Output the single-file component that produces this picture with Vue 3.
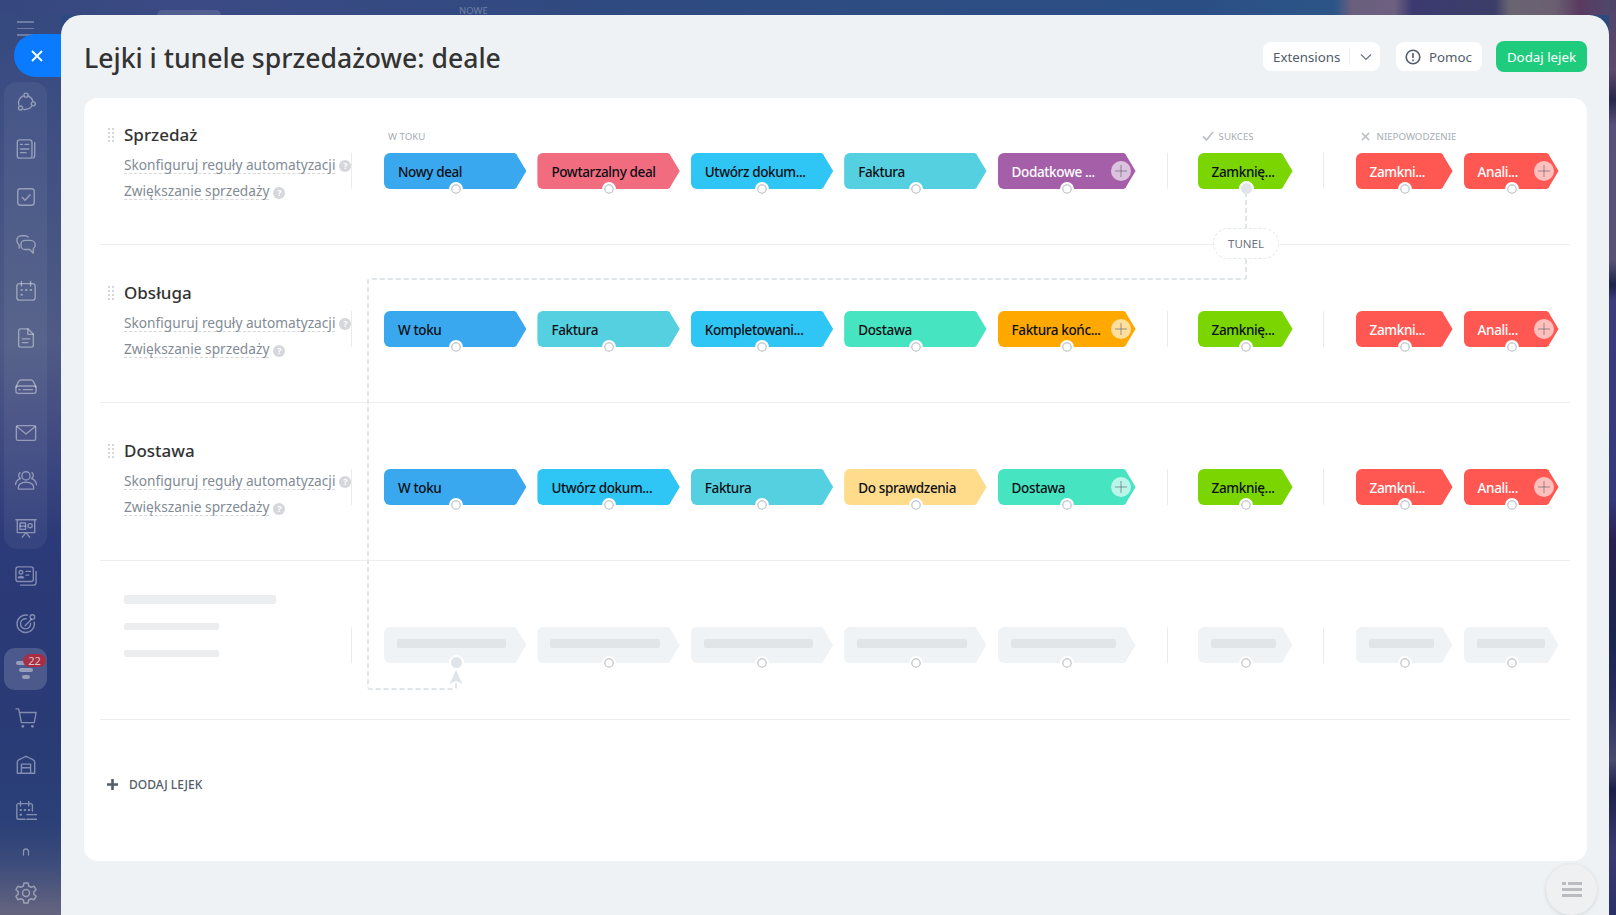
<script setup>
const rows = [
  {
    name: 'Sprzedaż', labels: true, connected: true,
    work: [['Nowy deal', '#39a8ef'], ['Powtarzalny deal', '#f16c7f'], ['Utwórz dokum...', '#2fc6f6'], ['Faktura', '#55d0e0'], ['Dodatkowe ...', '#a45fa8', 1]],
  },
  {
    name: 'Obsługa',
    work: [['W toku', '#39a8ef'], ['Faktura', '#55d0e0'], ['Kompletowani...', '#2fc6f6'], ['Dostawa', '#47e4c2'], ['Faktura końc...', '#ffa900']],
  },
  {
    name: 'Dostawa',
    work: [['W toku', '#39a8ef'], ['Utwórz dokum...', '#2fc6f6'], ['Faktura', '#55d0e0'], ['Do sprawdzenia', '#ffdb8c'], ['Dostawa', '#47e4c2']],
  },
]
const ghostWork = [110, 110, 110, 110, 110]
</script>

<template>
  <div class="page">
    <aside class="sidebar">
      <div class="burger"><i></i><i></i><i></i></div>
      <div class="side-group">
        <svg class="ic" viewBox="0 0 24 24"><circle cx="12" cy="4.500" r="2.200"/><circle cx="20" cy="14" r="2.200"/><circle cx="6" cy="18.500" r="2.200"/><path d="M15 5.500a9 9 0 0 1 4.500 5.500M18 17a9 9 0 0 1-8.500 3M4 15a9 9 0 0 1 4.500-9.500"/></svg>
        <svg class="ic" viewBox="0 0 24 24"><rect x="2.500" y="2" width="16" height="20" rx="2.500"/><path d="M21.500 5v14.500a2.500 2.500 0 0 1-2 2.400M6 7h2M11 7h4M6 12h9M6 16h6"/></svg>
        <svg class="ic" viewBox="0 0 24 24"><rect x="3" y="3" width="18" height="18" rx="3"/><path d="M8 12.500l3 3 5.500-6"/></svg>
        <svg class="ic" viewBox="0 0 24 24"><path d="M14.500 4.500A5 5 0 0 0 11 3H7a5 5 0 0 0-5 5c0 2.500 1 4 2.500 5v3.500"/><path d="M11 8h6a5 5 0 0 1 5 5 4.800 4.800 0 0 1-2 4v5l-4-4h-5a4.500 4.500 0 0 1-4.500-4.500v-1A4.500 4.500 0 0 1 11 8z"/></svg>
        <svg class="ic" viewBox="0 0 24 24"><rect x="2" y="4" width="20" height="18" rx="3"/><path d="M7 1.500v5M17 1.500v5"/><path class="dots" d="M7 11h.6M12 11h.6M17 11h.6M7 16h.6"/></svg>
        <svg class="ic" viewBox="0 0 24 24"><path d="M6 2h8l6 6v12a2 2 0 0 1-2 2H6a2 2 0 0 1-2-2V4a2 2 0 0 1 2-2z"/><path d="M14 2v6h6M8 13h8M8 17h6"/></svg>
        <svg class="ic" viewBox="0 0 24 24"><path d="M1 13l3-6a3 3 0 0 1 2.500-1.500h11A3 3 0 0 1 20 7l3 6"/><rect x="1" y="12" width="22" height="8" rx="2.500"/><path d="M4.500 16h1M9 16h10"/></svg>
        <svg class="ic" viewBox="0 0 24 24"><rect x="1.500" y="4" width="21" height="16" rx="1.500"/><path d="M2 5l10 8 10-8"/></svg>
        <svg class="ic" viewBox="0 0 24 24"><circle cx="12" cy="7.500" r="4.500"/><path d="M3.500 21c0-4 3-6.500 8.500-6.500s8.500 2.500 8.500 6.500c0 .5-.5 1-1 1h-15c-.5 0-1-.5-1-1zM5.500 4C3.500 5.500 3.500 9 6 10.500 3 11.500 1 14 .5 17M18.500 4c2 1.500 2 5-.5 6.500 3 1 5 3.500 5.500 6.500"/></svg>
        <svg class="ic" viewBox="0 0 24 24"><path d="M1 3h22M2.500 3v14h19V3M8 22l4-5 4 5"/><rect x="5.500" y="6.500" width="6" height="7"/><path d="M5.500 10h6"/><circle cx="16.500" cy="9.500" r="2.300"/></svg>
      </div>
      <div class="side-rest">
        <svg class="ic" viewBox="0 0 24 24"><rect x="1" y="2" width="19" height="16" rx="2.500"/><path d="M23 7v12a3 3 0 0 1-3 3H6"/><circle cx="6.500" cy="8" r="2"/><path d="M3.500 14c.5-2 5.500-2 6 0zM12 7h5M12 11h3"/></svg>
        <svg class="ic" viewBox="0 0 24 24"><path d="M13.500 3.500A9.500 9.500 0 1 0 21 11M12.500 7.500A5.500 5.500 0 1 0 17 12.500M11 15l7-7"/><circle cx="19" cy="5.500" r="2.500"/></svg>
        <div class="active-item">
          <i class="f1"></i><i class="f2"></i><i class="f3"></i>
          <span class="badge">22</span>
        </div>
        <svg class="ic cart" viewBox="0 0 24 24"><path d="M1 2h3l3 15h14l2-11H5"/><circle class="solid" cx="8.500" cy="21" r="1.500"/><circle class="solid" cx="19" cy="21" r="1.500"/></svg>
        <svg class="ic" viewBox="0 0 24 24"><path d="M2.500 21V9c0-1 .5-2 1.500-2.500l7-3.500a2.500 2.500 0 0 1 2 0l7 3.500c1 .5 1.500 1.500 1.500 2.500v12zM7 21V11h10v10M7 15h10"/></svg>
        <svg class="ic" viewBox="0 0 24 24"><path d="M11 21H4a2 2 0 0 1-2-2V6a2 2 0 0 1 2-2h13a2 2 0 0 1 2 2v6M6 1.500v5M15 1.500v5M13 16h11M13 21h11"/><path class="dots" d="M6 11h.6M10.500 11h.6M15 11h.6M6 16h.6"/></svg>
        <svg class="ic tiny" viewBox="0 0 8 8"><path d="M1.500 7V3.500a2.500 2.500 0 0 1 5 0V7"/></svg>
        <svg class="ic gear" viewBox="0 0 24 24"><circle cx="12" cy="12" r="3.500"/><path d="M10 2h4l.7 3 2.500 1.300 2.900-1 2 3.400-2.300 2.100v2.400l2.300 2.100-2 3.400-2.900-1-2.500 1.300-.7 3h-4l-.7-3-2.500-1.300-2.900 1-2-3.400 2.300-2.100v-2.400L1.900 8.700l2-3.400 2.900 1 2.500-1.300z"/></svg>
      </div>
    </aside>

    <div class="topbar">
      <span class="top-blob"></span>
      <span class="top-new">NOWE</span>
    </div>

    <button class="close" aria-label="Zamknij">
      <svg viewBox="0 0 14 14"><path d="M2 2l10 10M12 2L2 12"/></svg>
    </button>

    <main class="panel">
      <header class="head">
        <h1>Lejki i tunele sprzedażowe: deale</h1>
        <div class="head-actions">
          <div class="btn ext"><span>Extensions</span><i class="btn-sep"></i><svg viewBox="0 0 12 8"><path d="M1 1.500L6 6.500l5-5"/></svg></div>
          <div class="btn help"><svg viewBox="0 0 16 16"><circle cx="8" cy="8" r="6.800"/><path d="M8 4v5M8 10.500v1.700"/></svg><span>Pomoc</span></div>
          <div class="btn add">Dodaj lejek</div>
        </div>
      </header>

      <section class="card">
        <div v-for="(row, r) in rows" :key="row.name" class="row" :class="{ first: r === 0 }">
          <div class="info">
            <span class="grip"></span>
            <div class="info-text">
              <h2>{{ row.name }}</h2>
              <div class="link"><span>Skonfiguruj reguły automatyzacji</span><b>?</b></div>
              <div class="link"><span>Zwiększanie sprzedaży</span><b>?</b></div>
            </div>
          </div>
          <i class="sep s1"></i>
          <div class="group work">
            <div class="lab"><span v-if="row.labels">W TOKU</span></div>
            <div class="chips">
              <div v-for="(c, i) in row.work" :key="i" class="chip" :class="{ light: c[2], last: i === 4 }" :style="{ '--c': c[1] }">
                <span class="txt">{{ c[0] }}</span>
                <span v-if="i === 4" class="plus"></span>
                <span class="dot"></span>
              </div>
            </div>
          </div>
          <i class="sep s2"></i>
          <div class="group ok">
            <div class="lab"><template v-if="row.labels"><svg viewBox="0 0 12 10"><path d="M1 5.500L4.500 9 11 1"/></svg><span>SUKCES</span></template></div>
            <div class="chips">
              <div class="chip ok-chip" style="--c:#7bd500">
                <span class="txt">Zamknię...</span>
                <span class="dot" :class="{ filled: row.connected }"></span>
              </div>
            </div>
          </div>
          <i class="sep s3"></i>
          <div class="group bad">
            <div class="lab"><template v-if="row.labels"><svg viewBox="0 0 10 10"><path d="M1 1l8 8M9 1l-8 8"/></svg><span>NIEPOWODZENIE</span></template></div>
            <div class="chips">
              <div class="chip light f-a" style="--c:#ff5752"><span class="txt">Zamkni...</span><span class="dot"></span></div>
              <div class="chip light f-b" style="--c:#ff5752"><span class="txt">Anali...</span><span class="plus"></span><span class="dot"></span></div>
            </div>
          </div>
        </div>

        <div class="row ghost">
          <div class="info">
            <span class="grip none"></span>
            <div class="ghost-text"><i class="g1"></i><i class="g2"></i><i class="g2"></i></div>
          </div>
          <i class="sep s1"></i>
          <div class="group work">
            <div class="lab"></div>
            <div class="chips">
              <div v-for="(w, i) in ghostWork" :key="i" class="chip" :class="{ last: i === 4 }" style="--c:#f0f3f5">
                <i class="g-bar"></i>
                <span class="dot" :class="{ filled: i === 0 }"></span>
              </div>
            </div>
          </div>
          <i class="sep s2"></i>
          <div class="group ok">
            <div class="lab"></div>
            <div class="chips">
              <div class="chip ok-chip" style="--c:#f0f3f5"><i class="g-bar"></i><span class="dot"></span></div>
            </div>
          </div>
          <i class="sep s3"></i>
          <div class="group bad">
            <div class="lab"></div>
            <div class="chips">
              <div class="chip f-a" style="--c:#f0f3f5"><i class="g-bar"></i><span class="dot"></span></div>
              <div class="chip f-b" style="--c:#f0f3f5"><i class="g-bar"></i><span class="dot"></span></div>
            </div>
          </div>
        </div>

        <div class="add-row">
          <svg viewBox="0 0 11 11"><path d="M5.500 0v11M0 5.500h11"/></svg>
          <span>DODAJ LEJEK</span>
        </div>

        <svg class="wires" width="1503" height="763" viewBox="0 0 1503 763">
          <path d="M1162 94V131M1162 161V179a2 2 0 0 1-2 2H286a2 2 0 0 0-2 2V589a2 2 0 0 0 2 2H370a2 2 0 0 0 2-2V580"/>
          <path class="tip" d="M372 572l6.500 14-6.500-3-6.500 3z"/>
        </svg>
        <div class="tunnel">TUNEL</div>
      </section>
    </main>

    <button class="fab" aria-label="Menu"><i class="l0"></i><i class="l1"></i><i class="l1"></i></button>
  </div>
</template>

<style>
html, body { margin: 0; padding: 0; overflow: hidden; }
</style>

<style scoped>
.page {
  position: relative;
  width: 1616px;
  height: 915px;
  overflow: hidden;
  display: flex;
  font-family: "Noto Sans", "Open Sans", sans-serif;
  background-color: #2d4a80;
  background-repeat: no-repeat;
  background-image:
    linear-gradient(180deg, #4e4468 0, #5c4a6c 70px, #28274c 100px, #57507a 125px, #585278 260px, #1f2348 285px, #3a3c7c 300px, #35387a 500px, #2a2050 540px, #1a2550 640px, #2a2c5c 700px, #4a4a70 760px, #1e1f48 790px, #3a3a70 850px, #2a3068 915px),
    linear-gradient(90deg, #36477f 0, #3b4a84 200px, #2f4a80 600px, #2b4f85 1200px, #2c5587 1335px, #6a5f7d 1352px, #6d6080 1395px, #3b3a70 1412px, #3c3e68 1495px, #6a6472 1510px, #6a5f72 1555px, #5a3a60 1580px, #4d4a70 1616px),
    linear-gradient(180deg, #34497f 0, #3c4d82 100px, #4f5b85 340px, #424c82 430px, #2b3a78 540px, #293a75 720px, #2b4078 820px, #3a4a7a 860px, #65657f 915px);
  background-size: 7px 100%, 100% 15px, 61px 100%;
  background-position: right top, left top, left top;
}

.sidebar {
  width: 61px;
  flex: none;
  display: flex;
  flex-direction: column;
  align-items: flex-start;
}
.burger { margin: 21px 0 0 17px; height: 61px; display: flex; flex-direction: column; gap: 5px; }
.burger i { display: block; width: 17px; height: 1.500px; background: rgba(255, 255, 255, .28); }
.side-group {
  width: 43px;
  height: 467px;
  box-sizing: border-box;
  margin-left: 4px;
  padding: 8px 0;
  display: flex;
  flex-direction: column;
  align-items: center;
  gap: 23.300px;
  border-radius: 13px;
  background: rgba(255, 255, 255, .055);
}
.ic { width: 22px; height: 24px; fill: none; stroke: rgba(255, 255, 255, .42); stroke-width: 1.500; flex: none; stroke-linejoin: round; stroke-linecap: round; }
.ic .dots { stroke-width: 2.200; }
.ic .solid { fill: rgba(255, 255, 255, .42); stroke: none; }
.side-rest { margin: 15px 0 0 4px; width: 43px; display: flex; flex-direction: column; align-items: center; gap: 22.700px; }
.ic.cart { margin-top: 2px; }
.ic.tiny { width: 8px; height: 8px; margin-top: 2px; margin-bottom: 0; stroke-width: 1.300; }
.ic.gear { width: 24px; margin-top: 2px; }
.active-item {
  position: relative;
  width: 43px;
  height: 42px;
  margin: -9px 0;
  border-radius: 11px;
  background: rgba(255, 255, 255, .16);
}
.active-item i { position: absolute; height: 4px; border-radius: 2px; background: rgba(255, 255, 255, .42); }
.active-item .f1 { left: 12px; top: 13px; width: 18px; }
.active-item .f2 { left: 15px; top: 20px; width: 14px; }
.active-item .f3 { left: 18px; top: 27px; width: 8px; }
.badge {
  position: absolute;
  left: 19px;
  top: 6px;
  width: 23px;
  height: 13px;
  border-radius: 7px;
  background: #a62f45;
  color: rgba(255, 255, 255, .7);
  font-size: 11px;
  line-height: 13px;
  text-align: center;
}

.topbar { flex: 1; height: 15px; display: flex; align-items: flex-start; }
.top-blob { width: 64px; height: 5px; margin: 10px 0 0 96px; border-radius: 8px 8px 0 0; background: rgba(255, 255, 255, .12); }
.top-new { margin: 6px 0 0 238px; font-size: 9.500px; line-height: 10px; color: rgba(255, 255, 255, .3); }

.close {
  position: absolute;
  left: 14px;
  top: 34px;
  width: 49px;
  height: 43px;
  padding: 0 4px 0 0;
  border: 0;
  border-radius: 22px 0 0 22px;
  background: #0a7bff;
  display: flex;
  align-items: center;
  justify-content: center;
}
.close svg { width: 14px; height: 14px; fill: none; stroke: #fff; stroke-width: 1.800; }

.panel {
  position: absolute;
  left: 61px;
  top: 15px;
  right: 7px;
  bottom: 0;
  box-sizing: border-box;
  padding: 0 22px 0 23px;
  background: #eef2f4;
  border-radius: 20px 20px 0 0;
}
.head { height: 83px; display: flex; align-items: center; justify-content: space-between; }
h1 { margin: 3px 0 0; font-size: 26.600px; line-height: 34px; font-weight: 500; color: #333; }
.head-actions { display: flex; align-items: center; }
.btn { display: flex; align-items: center; box-sizing: border-box; font-size: 13.300px; color: #525c69; background: #fff; border-radius: 8px; height: 29px; }
.ext { width: 117px; padding-left: 10px; margin-right: 16px; }
.ext span { width: 76px; }
.btn-sep { width: 1px; height: 17px; background: #edeef0; }
.ext svg { width: 12px; height: 8px; margin-left: 10px; fill: none; stroke: #6a737f; stroke-width: 1.200; }
.help { width: 86px; padding-left: 9px; margin-right: 14px; gap: 8px; }
.help svg { width: 16px; height: 16px; fill: none; stroke: #525c69; stroke-width: 1.600; }
.add { width: 91px; height: 31px; justify-content: center; background: #1fcc7e; color: #fff; }

.card {
  position: relative;
  height: 763px;
  box-sizing: border-box;
  padding: 0 17px 0 16px;
  border-radius: 14px;
  background: #fff;
}
.row {
  height: 158px;
  box-sizing: border-box;
  padding-top: 36px;
  border-bottom: 1px solid #eceef0;
  display: flex;
  align-items: flex-start;
}
.row.first { height: 147px; padding-top: 25px; }
.row.ghost { height: 159px; }
.info { width: 251px; flex: none; display: flex; }
.grip {
  width: 8px;
  height: 16px;
  flex: none;
  margin: 4px 0 0 7px;
  background-image: radial-gradient(circle, #d3d6da 1.300px, transparent 1.500px);
  background-size: 4px 4px;
}
.grip.none { background: none; }
.info-text { margin-left: 9px; }
h2 { margin: 0; font-size: 17px; line-height: 24px; font-weight: 500; color: #333; }
.link { display: flex; align-items: center; height: 26.500px; font-size: 13.700px; color: #828b95; white-space: nowrap; }
.link:first-of-type { margin-top: 4.500px; }
.link span { line-height: 17px; border-bottom: 1px dashed #d5d7db; }
.link b {
  width: 12px;
  height: 12px;
  flex: none;
  margin: 3px 0 0 4px;
  border-radius: 50%;
  background: #d5d7dc;
  color: #fff;
  font-size: 9px;
  line-height: 12px;
  text-align: center;
}

.sep { width: 1px; height: 36px; margin-top: 30px; flex: none; background: #e9ebed; }
.s1 { margin-right: 32px; }
.s2 { margin-left: 31px; margin-right: 30px; }
.s3 { margin-left: 30px; margin-right: 32px; }
.group { flex: none; }
.lab { height: 30px; display: flex; align-items: center; padding: 0 0 4px 4px; box-sizing: border-box; font-size: 9.700px; color: #a8adb4; white-space: nowrap; }
.ok .lab svg, .bad .lab svg { fill: none; stroke: #bfc3c8; stroke-width: 1.800; margin-right: 5px; flex: none; }
.ok .lab svg { width: 12px; height: 10px; }
.bad .lab { padding-left: 5px; }
.bad .lab svg { width: 9px; height: 9px; margin-right: 7px; }
.chips { display: flex; gap: 11px; }
.chip { position: relative; width: 142.400px; height: 36px; flex: none; display: flex; align-items: center; }
.chip::before {
  content: "";
  position: absolute;
  inset: 0;
  border-radius: 6px;
  background: var(--c);
  clip-path: polygon(0 0, calc(100% - 12px) 0, calc(100% - 10px) 1px, calc(100% - 9px) 3px, 100% 50%, calc(100% - 9px) calc(100% - 3px), calc(100% - 10px) calc(100% - 1px), calc(100% - 12px) 100%, 0 100%);
}
.chip.last { width: 138px; }
.ok-chip { width: 95px; }
.f-a { width: 97px; }
.f-b { width: 95px; }
.txt { position: relative; margin: 1px 0 0 14px; font-size: 13.500px; letter-spacing: -.37px; font-weight: 500; color: #0b0f14; white-space: nowrap; }
.chip.light .txt { color: #fff; }
.dot {
  position: absolute;
  left: calc(50% + .5px);
  bottom: -7px;
  width: 14px;
  height: 14px;
  margin-left: -7px;
  box-sizing: border-box;
  border: 2px solid #fff;
  border-radius: 50%;
  background: #fff;
  box-shadow: inset 0 0 0 1.500px #c6cbcf;
}
.dot.filled { background: #dfe5e8; box-shadow: none; width: 15px; height: 15px; }
.plus {
  position: absolute;
  right: 5px;
  top: 8px;
  width: 20px;
  height: 20px;
  border-radius: 50%;
  background:
    linear-gradient(rgba(90, 100, 110, .32), rgba(90, 100, 110, .32)) center / 12px 2px no-repeat,
    linear-gradient(rgba(90, 100, 110, .32), rgba(90, 100, 110, .32)) center / 2px 12px no-repeat,
    rgba(255, 255, 255, .62);
}
.ghost-text { margin: -2px 0 0 9px; display: flex; flex-direction: column; align-items: flex-start; }
.ghost-text i { display: block; border-radius: 2px; background: #ebedef; }
.ghost-text .g1 { width: 152px; height: 9px; margin: 0 0 19px; }
.ghost-text .g2 { width: 95px; height: 7px; margin-bottom: 20px; }
.g-bar { position: relative; display: block; margin: -3px 20px 0 13px; height: 9px; flex: 1; border-radius: 2px; background: #e2e5e8; }
.ok-chip .g-bar { margin-right: 17px; }
.f-a .g-bar { margin-right: 19px; }
.f-b .g-bar { margin-right: 14px; }

.add-row { display: flex; align-items: center; margin: 56px 0 0 7px; height: 16px; gap: 11px; font-size: 12px; font-weight: 500; color: #535c69; }
.add-row svg { width: 11px; height: 11px; fill: none; stroke: #535c69; stroke-width: 2.600; }

.wires { position: absolute; left: 0; top: 0; pointer-events: none; fill: none; }
.wires path { stroke: #e0e5e8; stroke-width: 2; stroke-dasharray: 5 3; }
.wires .tip { fill: #dfe5e8; stroke: none; stroke-dasharray: none; }
.tunnel {
  position: absolute;
  left: 1129px;
  top: 130px;
  width: 66px;
  height: 31px;
  box-sizing: border-box;
  border: 1px dashed #e5e8ea;
  border-radius: 16px;
  background: #fff;
  color: #6a737f;
  font-size: 11.500px;
  line-height: 29px;
  text-align: center;
}

.fab {
  position: absolute;
  left: 1546px;
  top: 864px;
  width: 51px;
  height: 51px;
  padding: 0;
  border: 0;
  border-radius: 50%;
  background: #eff0f2;
  box-shadow: 0 1px 4px rgba(0, 0, 0, .12);
}
.fab i { position: absolute; height: 3px; background: #b9bcc0; }
.fab .l0 { left: 16px; right: 15px; top: 18px; background: linear-gradient(90deg, #b9bcc0 4px, transparent 4px, transparent 6px, #b9bcc0 6px); }
.fab .l1 { left: 16px; right: 15px; top: 24px; }
.fab .l1 + .l1 { top: 30px; }
</style>
